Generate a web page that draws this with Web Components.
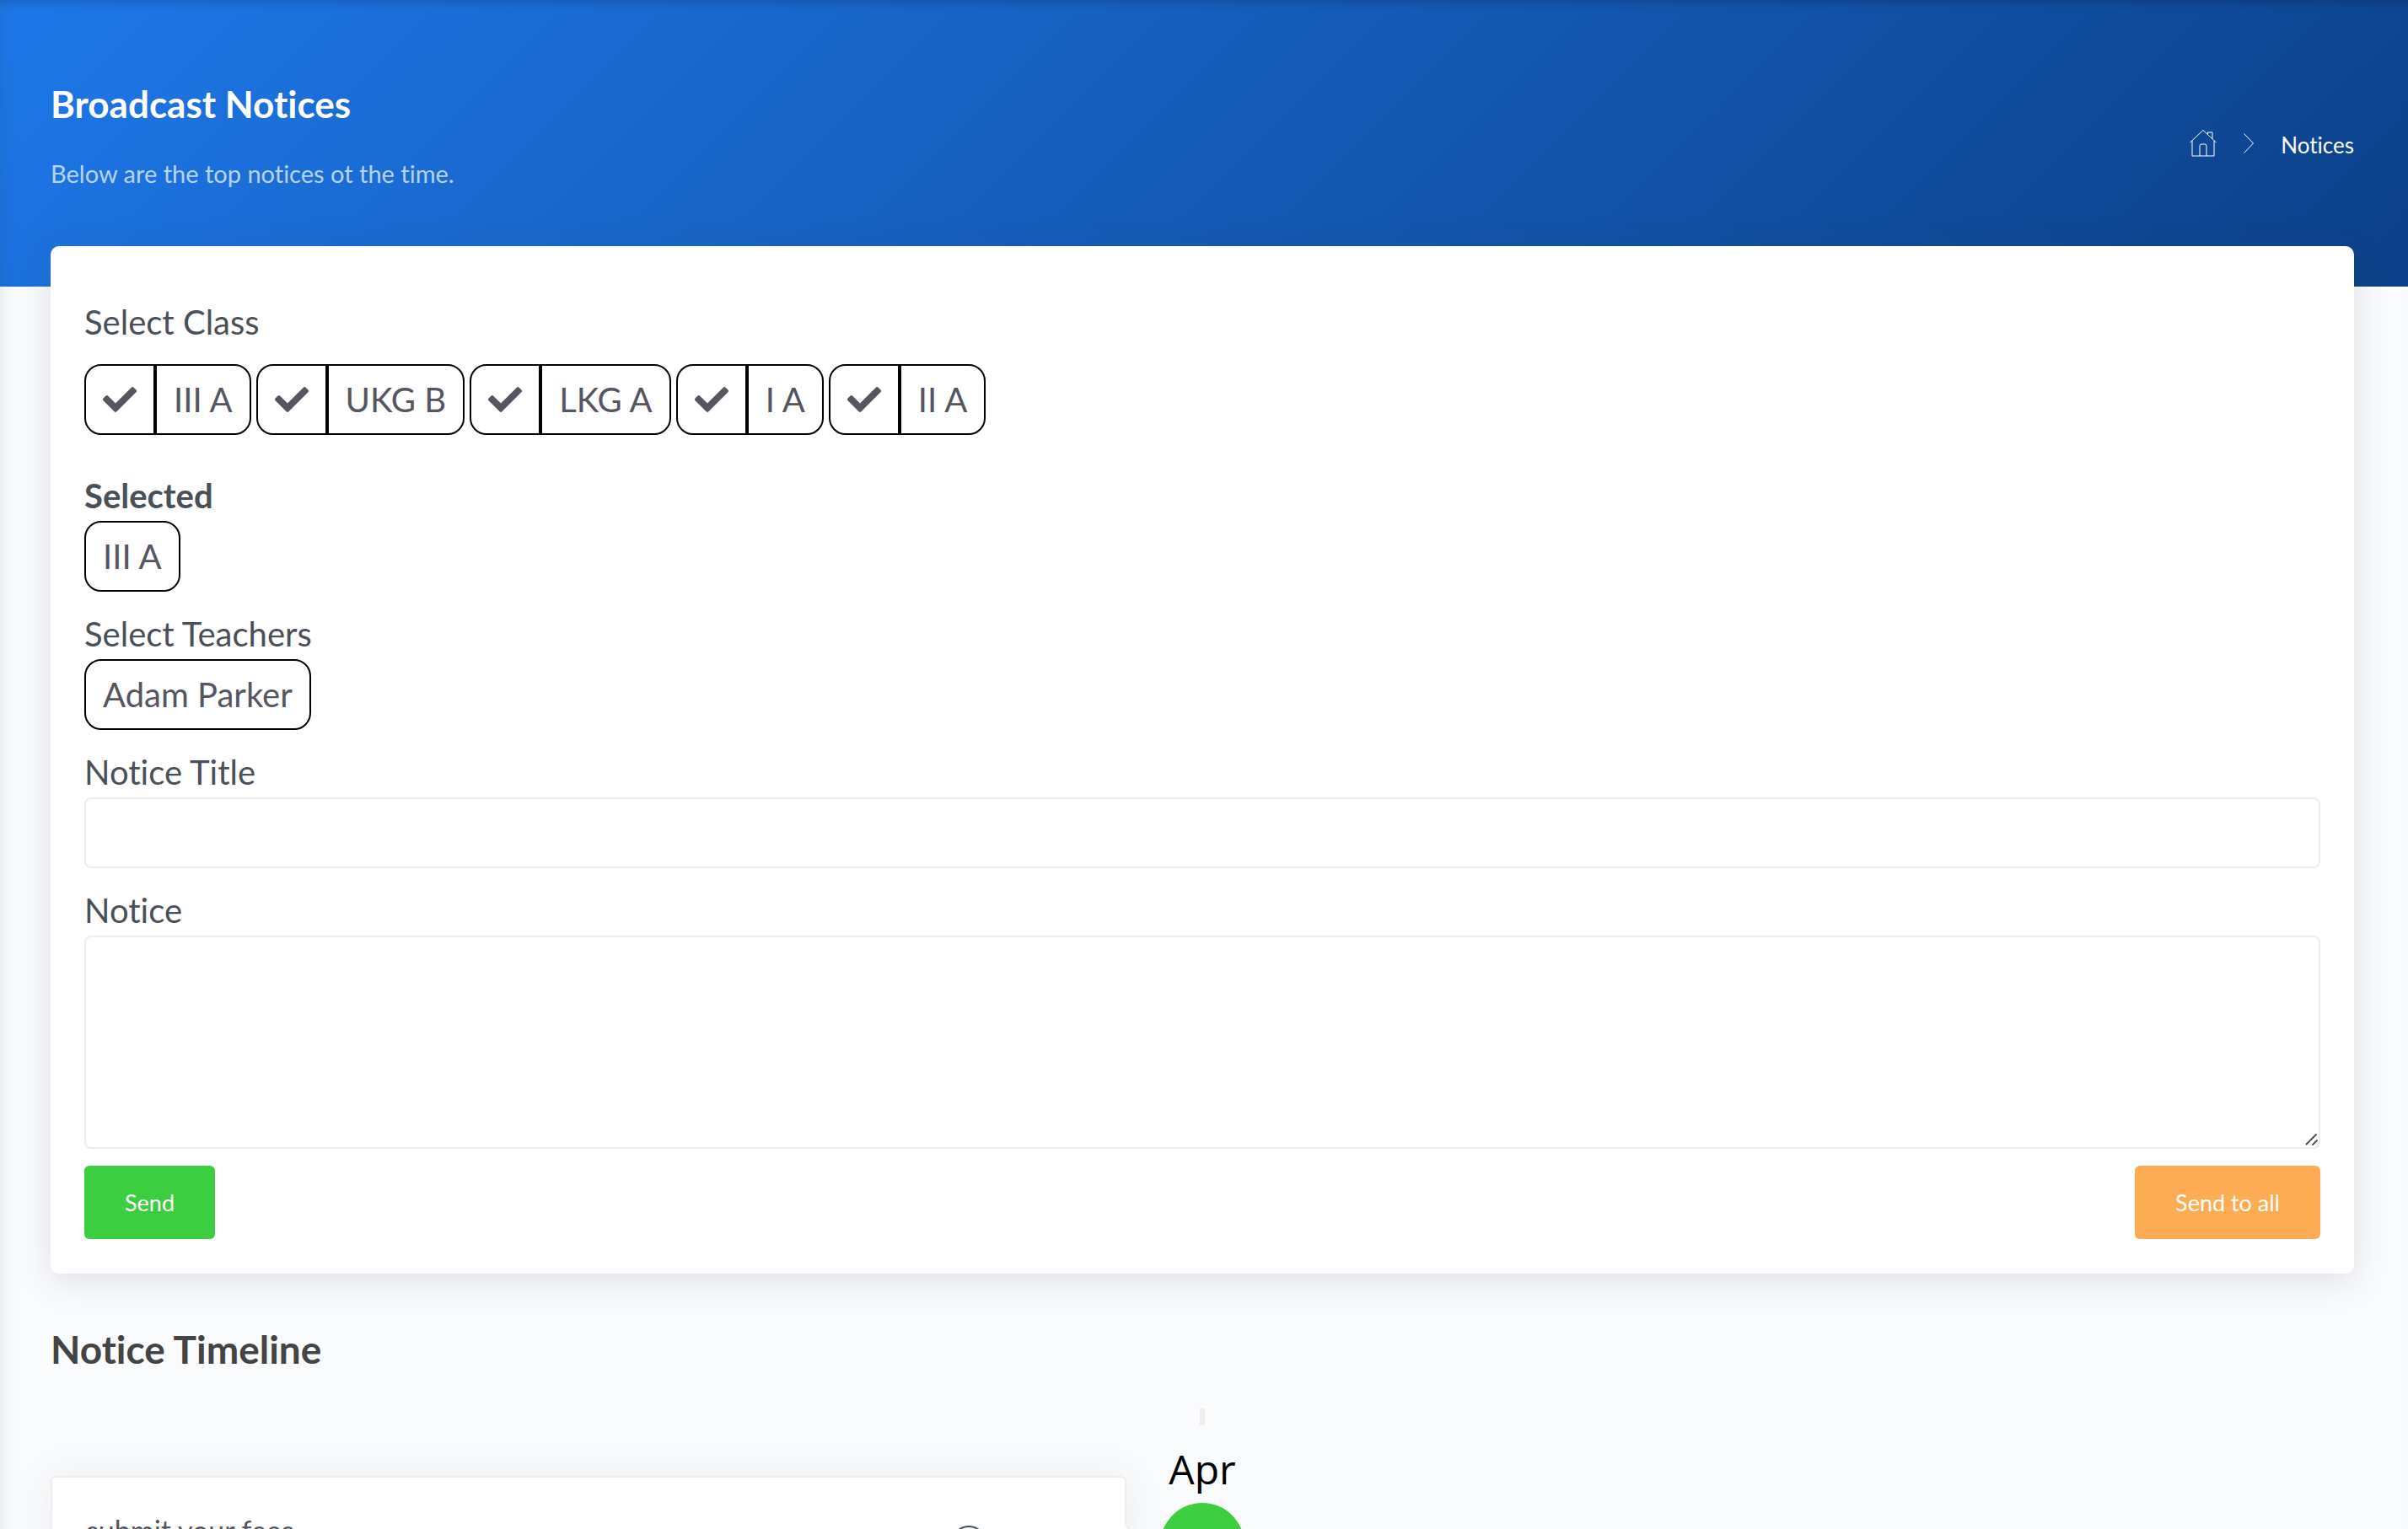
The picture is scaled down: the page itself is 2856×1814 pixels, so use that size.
<!DOCTYPE html>
<html lang="en">
<head>
<meta charset="utf-8">
<title>Broadcast Notices</title>
<style>
    html {
        height: 100%;
        overflow: hidden;
    }
    body {
        margin: 0;
        height: 100%;
        overflow: hidden;
        background: #fafbfd;
        color: #495057;
        font-family: Lato, sans-serif;
        font-size: 40px;
        font-variant-ligatures: none;
        line-height: 60px;
    }
</style>
</head>
<body>
<notices-page></notices-page>

<script>
/**
 * Attaches an open shadow root filled with the given markup.
 */
const render = (el, html) => {
    el.attachShadow({ mode: 'open' }).innerHTML = html;
};

class PageHeader extends HTMLElement {
    constructor() {
        super();
        render(this, `
<style>
    :host {
        display: flex;
        justify-content: space-between;
        align-items: center;
        box-sizing: border-box;
        height: 340px;
        padding: 0 64px 0 60px;
        background: linear-gradient(135deg, #1e77e8 0%, #0c4088 100%);
        color: white;
    }
    h1 {
        margin: 0 0 34px;
        font-size: 44px;
        line-height: 54px;
        font-weight: 700;
    }
    p {
        margin: 0;
        font-size: 29px;
        line-height: 44px;
        color: rgba(255, 255, 255, 0.7);
    }
    .heading {
        padding-bottom: 16px;
    }
    nav {
        display: flex;
        align-items: center;
        font-size: 26px;
        line-height: 40px;
    }
    nav a {
        display: flex;
        color: white;
        text-decoration: none;
    }
    .current {
        padding-top: 4px;
    }
    svg {
        fill: none;
        stroke: white;
    }
    .chevron {
        margin: 0 32px;
    }
</style>
<div class="heading">
    <h1>Broadcast Notices</h1>
    <p>Below are the top notices ot the time.</p>
</div>
<nav aria-label="Breadcrumb">
    <a href="#" aria-label="Home">
        <svg width="32" height="34" viewBox="0 0 32 34">
            <path d="M.5 16 16 1.500 31.500 16M3 14v18h26V14M12 32V20q0-2 2-2h4q2 0 2 2v12M21.500 6V4H27v7.500"/>
        </svg>
    </a>
    <svg class="chevron" width="12" height="24" viewBox="0 0 12 24"><path d="M.5.5 11.500 12 .5 23.500"/></svg>
    <a class="current" href="#">Notices</a>
</nav>
`);
    }
}

class ClassChip extends HTMLElement {
    constructor() {
        super();
        render(this, `
<style>
    :host {
        display: inline-flex;
    }
    button {
        box-sizing: border-box;
        height: 84px;
        margin: 0;
        padding: 0 20px;
        border: 2px solid black;
        border-radius: 20px;
        background: white;
        color: #55565f;
        font: inherit;
        font-variant-ligatures: none;
        cursor: pointer;
    }
    .tick {
        display: none;
        width: 84px;
        border-radius: 20px 0 0 20px;
    }
    .tick svg {
        display: block;
        fill: currentColor;
    }
    :host([checkable]) .tick {
        display: block;
    }
    :host([checkable]) .name {
        border-radius: 0 20px 20px 0;
    }
</style>
<button class="tick" aria-label="Select">
    <svg width="40" height="40" viewBox="0 0 512 512">
        <path d="M174 439 7 273c-10-10-10-26 0-36l36-36c10-10 26-10 36 0l113 113L433 72c10-10 26-10 36 0l36 36c10 10 10 26 0 36L210 439c-10 10-26 10-36 0z"/>
    </svg>
</button>
<button class="name"><slot></slot></button>
`);
    }
}

class ActionButton extends HTMLElement {
    constructor() {
        super();
        render(this, `
<style>
    :host {
        display: block;
    }
    button {
        display: block;
        height: 87px;
        padding: 0 48px;
        border: none;
        border-radius: 6px;
        background: var(--button-color);
        color: white;
        font: inherit;
        font-size: 27px;
        cursor: pointer;
    }
</style>
<button><slot></slot></button>
`);
    }
}

class NoticeForm extends HTMLElement {
    constructor() {
        super();
        render(this, `
<style>
    :host {
        display: flex;
        flex-direction: column;
        gap: 20px;
        padding: 60px 40px 41px;
        border-radius: 10px;
        background: white;
        box-shadow: 0 8px 40px rgba(69, 65, 78, 0.15);
    }
    .classes {
        display: flex;
        flex-direction: column;
        gap: 20px;
        margin-bottom: 22px;
    }
    .chips {
        display: flex;
        gap: 6px;
    }
    .field {
        display: flex;
        flex-direction: column;
    }
    input,
    textarea {
        box-sizing: border-box;
        width: 100%;
        margin: 0;
        padding: 12px 20px;
        border: 2px solid #ebedf2;
        border-radius: 8px;
        background: white;
        color: inherit;
        font: inherit;
        outline: none;
    }
    input {
        height: 84px;
    }
    textarea {
        display: block;
        height: 253px;
    }
    textarea::-webkit-resizer {
        display: none;
    }
    .text-area {
        position: relative;
    }
    .grip {
        position: absolute;
        right: 3px;
        bottom: 4px;
        fill: none;
        stroke: #555;
        stroke-width: 2;
        stroke-linecap: round;
        pointer-events: none;
    }
    .actions {
        display: flex;
        justify-content: space-between;
    }
</style>
<div class="classes">
    <div>Select Class</div>
    <div class="chips">
        <class-chip checkable>III A</class-chip>
        <class-chip checkable>UKG B</class-chip>
        <class-chip checkable>LKG A</class-chip>
        <class-chip checkable>I A</class-chip>
        <class-chip checkable>II A</class-chip>
    </div>
</div>
<div class="field">
    <b>Selected</b>
    <div class="chips"><class-chip>III A</class-chip></div>
</div>
<div class="field">
    <div>Select Teachers</div>
    <div class="chips"><class-chip>Adam Parker</class-chip></div>
</div>
<div class="field">
    <label for="title">Notice Title</label>
    <input id="title" type="text">
</div>
<div class="field">
    <label for="notice">Notice</label>
    <div class="text-area">
        <textarea id="notice"></textarea>
        <svg class="grip" width="15" height="15" viewBox="0 0 15 15"><path d="M1.500 13.500 13 2M9 14l5-5"/></svg>
    </div>
</div>
<div class="actions">
    <action-button style="--button-color: #3dcd41">Send</action-button>
    <action-button style="--button-color: #fdac53">Send to all</action-button>
</div>
`);
    }
}

class NoticeTimeline extends HTMLElement {
    constructor() {
        super();
        render(this, `
<style>
    :host {
        display: block;
    }
    h2 {
        margin: 0 0 42px;
        color: #444;
        font-size: 46px;
        line-height: 56px;
        font-weight: 700;
    }
    .row {
        display: grid;
        grid-template-columns: 1fr 180px 1fr;
        align-items: start;
    }
    .card {
        position: relative;
        display: flex;
        justify-content: space-between;
        box-sizing: border-box;
        height: 260px;
        margin-top: 80px;
        padding: 33px 164px 36px 40px;
        border: 2px solid #eee;
        border-radius: 6px;
        background: white;
        color: #55565f;
        font-size: 34px;
        box-shadow: 0 2px 50px rgba(69, 65, 78, 0.08);
    }
    /* arrow that points at the month's dot */
    .card::after {
        content: "";
        position: absolute;
        top: 62px;
        right: -18px;
        width: 32px;
        height: 32px;
        border: solid #eee;
        border-width: 2px 2px 0 0;
        background: white;
        transform: rotate(45deg);
    }
    .clock {
        margin-top: 24px;
        fill: none;
        stroke: #495057;
        stroke-width: 2;
    }
    .month {
        display: flex;
        flex-direction: column;
        align-items: center;
        color: black;
        font: 48px/68px "Open Sans", sans-serif;
    }
    .line {
        width: 6px;
        height: 20px;
        margin-bottom: 18px;
        background: #eee;
    }
    .dot {
        width: 100px;
        height: 100px;
        margin-top: 6px;
        border-radius: 50%;
        background: #3dcd41;
    }
</style>
<h2>Notice Timeline</h2>
<div class="row">
    <div class="card">
        <span>submit your fees</span>
        <svg class="clock" width="42" height="42" viewBox="0 0 42 42">
            <circle cx="21" cy="21" r="20"/>
            <path d="M21 9v12l8 5"/>
        </svg>
    </div>
    <div class="month">
        <div class="line"></div>
        <span>Apr</span>
        <div class="dot"></div>
    </div>
</div>
`);
    }
}

class NoticesPage extends HTMLElement {
    constructor() {
        super();
        render(this, `
<style>
    :host {
        display: block;
        position: relative;
    }
    main {
        display: flex;
        flex-direction: column;
        gap: 62px;
        margin-top: -48px;
        padding: 0 64px 0 60px;
    }
    /* shade cast on the page by the top bar and the side menu */
    .shade {
        position: absolute;
        inset: 0;
        box-shadow: inset 16px 0 20px -16px rgba(69, 65, 78, 0.12), inset 0 12px 14px -12px rgba(0, 0, 0, 0.25);
        pointer-events: none;
    }
</style>
<page-header></page-header>
<main>
    <notice-form></notice-form>
    <notice-timeline></notice-timeline>
</main>
<div class="shade"></div>
`);
    }
}

window.customElements.define('page-header', PageHeader);
window.customElements.define('class-chip', ClassChip);
window.customElements.define('action-button', ActionButton);
window.customElements.define('notice-form', NoticeForm);
window.customElements.define('notice-timeline', NoticeTimeline);
window.customElements.define('notices-page', NoticesPage);
</script>
</body>
</html>
